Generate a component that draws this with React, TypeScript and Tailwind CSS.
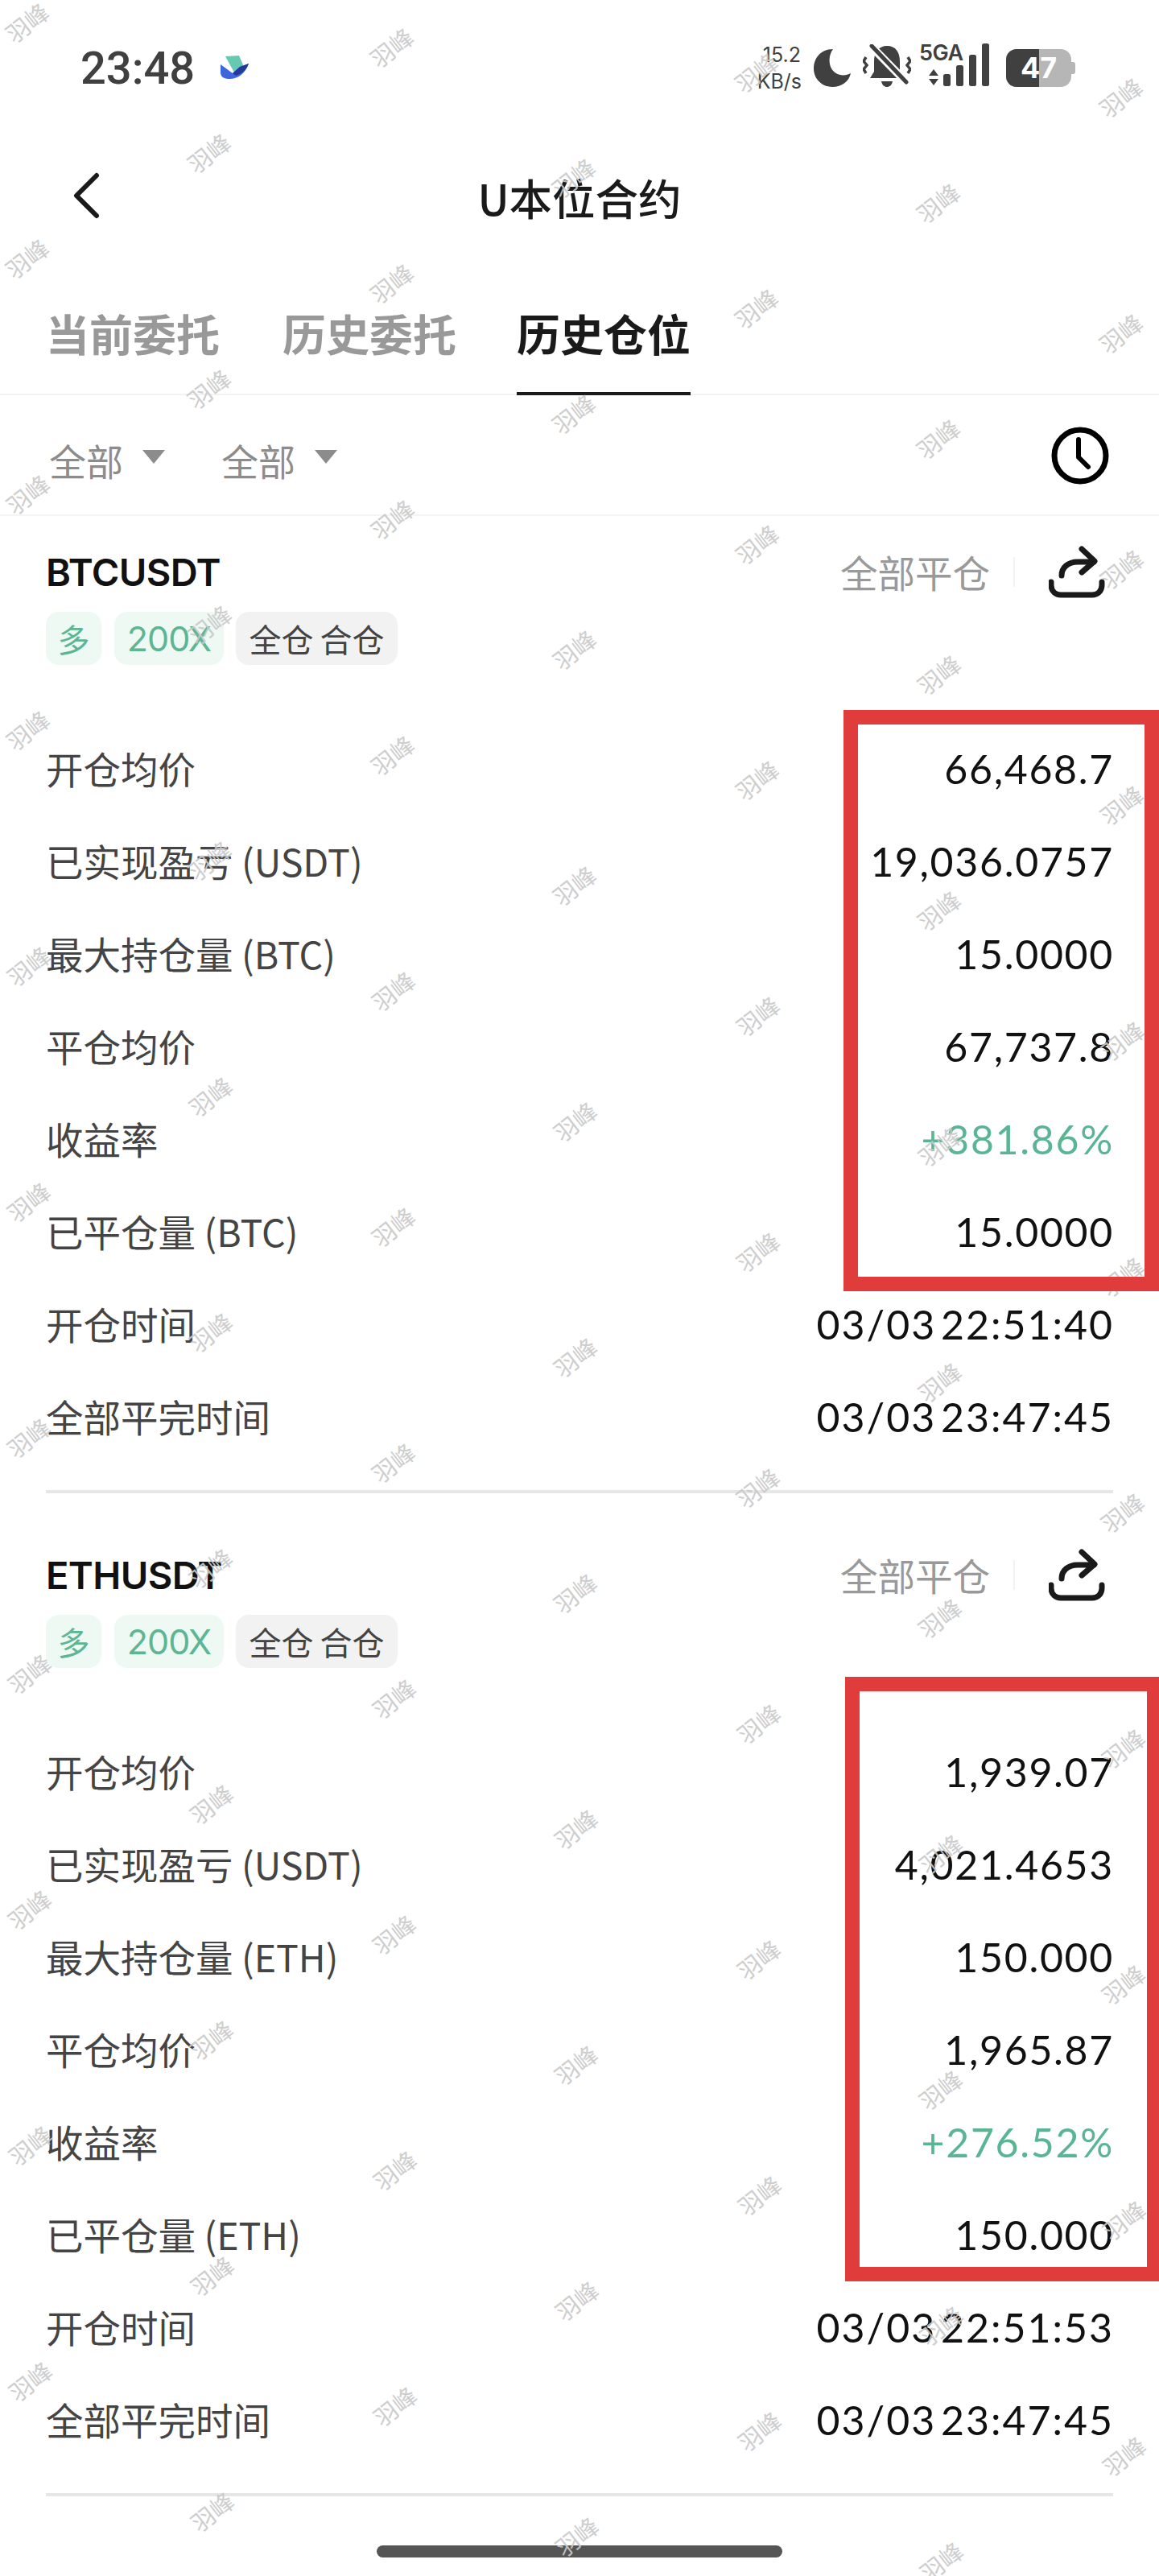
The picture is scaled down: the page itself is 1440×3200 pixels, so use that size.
import React from "react";

const cjk = "font-['Noto_Sans_CJK_SC','Noto_Sans',sans-serif]";

function Watermarks() {
  const marks: { x: number; y: number }[] = [];
  for (let r = 0; r < 11; r++) {
    for (let c = 0; c < 4; c++) {
      marks.push({ x: 34 + r * 0.4 + c * 453, y: 28 + r * 293 + c * 31 });
    }
    for (let c = 0; c < 3; c++) {
      marks.push({ x: 260 + r * 0.4 + c * 453, y: 190 + r * 293 + c * 31 });
    }
  }
  return (
    <div className="pointer-events-none absolute inset-0 z-10 overflow-hidden">
      {marks.map((m, i) => (
        <span
          key={i}
          className={`absolute -rotate-[38deg] whitespace-nowrap text-[29px] leading-none text-[#c9c9c9] opacity-90 ${cjk}`}
          style={{ left: m.x - 30, top: m.y - 15 }}
        >
          羽峰
        </span>
      ))}
    </div>
  );
}

function Logo() {
  return (
    <svg width="36" height="30" viewBox="0 0 36 30" className="ml-[32px] -translate-y-[1px]">
      <path d="M6 1 L23 0 L29 14 L17 21 Z" fill="#68c9b3" />
      <path d="M0 11 L15 22 L24 14 L35 10 C31 22 22 29 11 29 C5 29 0 27 0 21 Z" fill="#3d66dc" />
      <path d="M15 22 L24 14 L35 10 C32 18 26 23 19 25 Z" fill="#20399b" />
    </svg>
  );
}

function StatusIcons() {
  return (
    <div className="ml-auto flex items-center text-[#404040]">
      <div className="mr-[14px] flex w-[56px] flex-col items-end font-['Inter',sans-serif] text-[25px] leading-[33px]">
        <span className="pr-[1px]">15.2</span>
        <span>KB/s</span>
      </div>
      <svg width="48" height="48" viewBox="0 0 48 48" className="mr-[14px] -translate-y-[1px]">
        <path d="M25 1 C11 1 1 11 1 25 C1 38 11 48 24 48 C36 48 45 41 47 31 C38 36 26 33 22 23 C19 15 21 6 25 1 Z" fill="#404040" />
      </svg>
      <svg width="60" height="54" viewBox="0 0 60 54" className="mr-[10px] -translate-y-[3px]">
        <path d="M30 2 C41 2 46 10 46 21 L46 34 L51 42 L9 42 L14 34 L14 21 C14 10 20 2 30 2 Z" fill="#404040" />
        <path d="M23 46 H37 C36 51 33 53 30 53 C27 53 24 51 23 46 Z" fill="#404040" />
        <path d="M9 1 L56 49" stroke="#fff" strokeWidth="10" />
        <path d="M11 2 L54 47" stroke="#404040" strokeWidth="5" strokeLinecap="round" />
        <path d="M4 16 L1 21 L5 26 L1 31 L4 36 M56 16 L59 21 L55 26 L59 31 L56 36" stroke="#404040" strokeWidth="3.5" fill="none" />
      </svg>
      <div className="relative mr-[20px] h-[54px] w-[88px] -translate-y-[4px]">
        <span className="absolute left-0 top-0 font-['Inter',sans-serif] text-[27px] font-semibold leading-[24px] tracking-[-0.5px]">5GA</span>
        <svg width="88" height="54" viewBox="0 0 88 54" className="absolute inset-0">
          <path d="M18 32 L24 40 H12 Z M18 52 L24 44 H12 Z" fill="#404040" />
          <rect x="30" y="38" width="9" height="15" rx="2.5" fill="#404040" />
          <rect x="46" y="27" width="9" height="26" rx="2.5" fill="#404040" />
          <rect x="62" y="14" width="9" height="39" rx="2.5" fill="#404040" />
          <rect x="78" y="0" width="9" height="53" rx="2.5" fill="#404040" />
        </svg>
      </div>
      <div className="relative mr-[104px] h-[47px] w-[86px] -translate-y-[1px]">
        <div className="absolute left-0 top-0 h-[47px] w-[81px] overflow-hidden rounded-[13px] bg-[#b6b6b6]">
          <div className="h-full w-[41px] bg-[#404040]" />
        </div>
        <div className="absolute right-0 top-[16px] h-[15px] w-[5px] rounded-r-[3px] bg-[#b6b6b6]" />
        <span className="absolute left-[18px] top-[3px] font-['Inter',sans-serif] text-[36px] font-bold leading-[41px] text-white">47</span>
      </div>
    </div>
  );
}

function ShareIcon() {
  return (
    <svg width="70" height="66" viewBox="0 0 70 66" fill="none" stroke="#1a1a1a" strokeWidth="7" strokeLinecap="round" strokeLinejoin="round">
      <path d="M16 38 C16 28 24 21 36 21 H56" />
      <path d="M41 5 L57 20 L41 34" />
      <path d="M3 46 V50 C3 58 9 62 15 62 H54 C61 62 66 57 66 50 V46" />
    </svg>
  );
}

type Row = { label: string; value: string; green?: boolean; time?: boolean };

function Tag({ children, green, className }: { children: React.ReactNode; green?: boolean; className: string }) {
  return (
    <div
      className={`flex h-[66px] items-center justify-center rounded-[16px] leading-none ${
        green ? "bg-[#eef9f4] text-[#5cb694]" : "bg-[#f2f2f2] text-[#444444]"
      } ${className}`}
    >
      {children}
    </div>
  );
}

function Card({
  symbol,
  rows,
  boxTop,
  boxHeight,
  boxWidth,
  boxBorder,
}: {
  symbol: string;
  rows: Row[];
  boxTop: string;
  boxHeight: string;
  boxWidth: string;
  boxBorder: string;
}) {
  return (
    <section className="relative px-[57px]">
      <div className="flex h-[62px] translate-y-[38px] items-center">
        <span className="translate-y-[1px] font-['Inter',sans-serif] text-[47px] font-semibold tracking-[-0.6px] text-[#111111]">{symbol}</span>
        <span className="ml-auto text-[46.5px] leading-none text-[#999999]">全部平仓</span>
        <span className="ml-[29px] h-[37px] w-[2px] bg-[#f3f3f3]" />
        <span className="ml-[42px] mr-[10px] flex">
          <ShareIcon />
        </span>
      </div>
      <div className="mt-[57px] flex h-[66px] items-center">
        <Tag green className="w-[69px] text-[40px]">多</Tag>
        <Tag green className="ml-[16px] w-[136px] font-['Inter',sans-serif] text-[43px] font-normal tracking-[-1px]">200X</Tag>
        <Tag className="ml-[15px] w-[201px] gap-[8px] text-[40px]">
          <span>全仓</span>
          <span>合仓</span>
        </Tag>
      </div>
      <div className="mt-[71px]">
        {rows.map((r) => (
          <div key={r.label} className="flex h-[115px] items-center justify-between">
            <span className="text-[46.5px] leading-none text-[#444444]">{r.label}</span>
            <span
              className={`font-['Lato',sans-serif] text-[50px] leading-none ${
                r.green ? "text-[#5ab594]" : "text-[#111111]"
              } ${r.time ? "-mr-[1px] tracking-[2px] [word-spacing:-9px]" : "-mr-[1px] tracking-[1.7px]"}`}
            >
              {r.value}
            </span>
          </div>
        ))}
      </div>
      <div className="mt-[34px] h-[4px] bg-[#e6e6e6]" />
      <div
        className={`absolute right-0 z-20 border-solid border-[#e03c3c] ${boxBorder} ${boxTop} ${boxHeight} ${boxWidth}`}
      />
    </section>
  );
}

const btc: Row[] = [
  { label: "开仓均价", value: "66,468.7" },
  { label: "已实现盈亏 (USDT)", value: "19,036.0757" },
  { label: "最大持仓量 (BTC)", value: "15.0000" },
  { label: "平仓均价", value: "67,737.8" },
  { label: "收益率", value: "+381.86%", green: true },
  { label: "已平仓量 (BTC)", value: "15.0000" },
  { label: "开仓时间", value: "03/03 22:51:40", time: true },
  { label: "全部平完时间", value: "03/03 23:47:45", time: true },
];
const eth: Row[] = [
  { label: "开仓均价", value: "1,939.07" },
  { label: "已实现盈亏 (USDT)", value: "4,021.4653" },
  { label: "最大持仓量 (ETH)", value: "150.000" },
  { label: "平仓均价", value: "1,965.87" },
  { label: "收益率", value: "+276.52%", green: true },
  { label: "已平仓量 (ETH)", value: "150.000" },
  { label: "开仓时间", value: "03/03 22:51:53", time: true },
  { label: "全部平完时间", value: "03/03 23:47:45", time: true },
];

export default function App() {
  return (
    <div className={`relative h-[3200px] w-[1440px] overflow-hidden bg-white ${cjk}`}>
      <Watermarks />
      <div className="flex h-[170px] items-center pl-[100px]">
        <span className="font-['Roboto',sans-serif] text-[56px] font-medium leading-none text-[#404040]">23:48</span>
        <Logo />
        <StatusIcons />
      </div>
      <div className="relative flex h-[158px] items-center justify-center pb-[8px]">
        <svg width="36" height="58" viewBox="0 0 36 58" fill="none" stroke="#1a1a1a" strokeWidth="6" strokeLinecap="round" strokeLinejoin="round" className="absolute left-[89px] top-[44px]">
          <path d="M31 4 L6 29 L31 54" />
        </svg>
        <span className="text-[53.5px] font-medium leading-none text-[#1a1a1a]">U本位合约</span>
      </div>
      <div className="flex h-[163px] border-b-2 border-[#f2f2f2] pl-[57px] pt-[59px]">
        <span className="text-[54px] font-bold leading-[54px] text-[#999999]">当前委托</span>
        <span className="ml-[78px] text-[54px] font-bold leading-[54px] text-[#999999]">历史委托</span>
        <span className="relative ml-[75px] text-[54px] font-bold leading-[54px] text-[#1a1a1a]">
          历史仓位
          <span className="absolute bottom-[-2px] left-0 h-[4px] w-full bg-[#1a1a1a]" />
        </span>
      </div>
      <div className="flex h-[150px] items-center border-b-2 border-[#f4f4f4] pl-[61px] pr-[62px]">
        <span className="translate-y-[6px] text-[46px] leading-none text-[#8c8c8c]">全部</span>
        <span className="ml-[24px] h-0 w-0 translate-y-[2px] border-x-[14px] border-t-[17px] border-x-transparent border-t-[#8c8c8c]" />
        <span className="ml-[70px] translate-y-[6px] text-[46px] leading-none text-[#8c8c8c]">全部</span>
        <span className="ml-[24px] h-0 w-0 translate-y-[2px] border-x-[14px] border-t-[17px] border-x-transparent border-t-[#8c8c8c]" />
        <svg width="72" height="72" viewBox="0 0 72 72" fill="none" stroke="#000" strokeWidth="7" strokeLinecap="round" strokeLinejoin="round" className="ml-auto translate-y-[1px]">
          <circle cx="36" cy="36" r="32" />
          <path d="M34 16 V38 L46 50" strokeWidth="6" />
        </svg>
      </div>
      <Card symbol="BTCUSDT" rows={btc} boxTop="top-[241px]" boxHeight="h-[722px]" boxWidth="w-[392px]" boxBorder="border-[18px]" />
      <div className="h-[32px]" />
      <Card symbol="ETHUSDT" rows={eth} boxTop="top-[196px]" boxHeight="h-[751px]" boxWidth="w-[390px]" boxBorder="border-[18px] border-r-[15px]" />
      <div className="absolute bottom-[23px] left-[468px] z-0 h-[15px] w-[504px] rounded-[8px] bg-[#555555]" />
    </div>
  );
}
